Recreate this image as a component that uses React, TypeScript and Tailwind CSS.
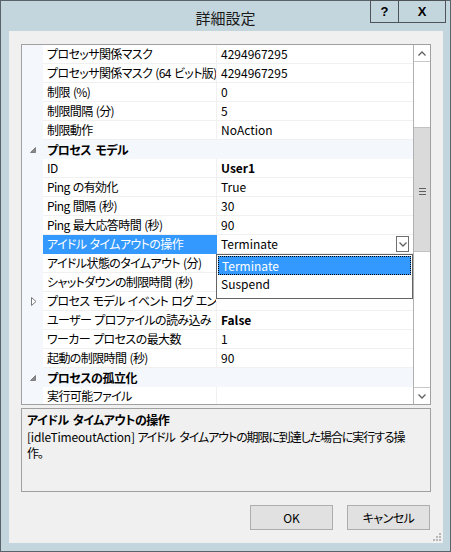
import React from "react";

type Row =
  | { kind: "prop"; label: string; value?: string; bold?: boolean; expandable?: boolean }
  | { kind: "cat"; label: string };

const rows: Row[] = [
  { kind: "prop", label: "プロセッサ関係マスク", value: "4294967295" },
  { kind: "prop", label: "プロセッサ関係マスク (64 ビット版)", value: "4294967295" },
  { kind: "prop", label: "制限 (%)", value: "0" },
  { kind: "prop", label: "制限間隔 (分)", value: "5" },
  { kind: "prop", label: "制限動作", value: "NoAction" },
  { kind: "cat", label: "プロセス モデル" },
  { kind: "prop", label: "ID", value: "User1", bold: true },
  { kind: "prop", label: "Ping の有効化", value: "True" },
  { kind: "prop", label: "Ping 間隔 (秒)", value: "30" },
  { kind: "prop", label: "Ping 最大応答時間 (秒)", value: "90" },
  { kind: "prop", label: "アイドル タイムアウトの操作", value: "Terminate" },
  // these two values sit under the open drop-down list
  { kind: "prop", label: "アイドル状態のタイムアウト (分)", value: "" },
  { kind: "prop", label: "シャットダウンの制限時間 (秒)", value: "" },
  { kind: "prop", label: "プロセス モデル イベント ログ エントリ", expandable: true },
  { kind: "prop", label: "ユーザー プロファイルの読み込み", value: "False", bold: true },
  { kind: "prop", label: "ワーカー プロセスの最大数", value: "1" },
  { kind: "prop", label: "起動の制限時間 (秒)", value: "90" },
  { kind: "cat", label: "プロセスの孤立化" },
  { kind: "prop", label: "実行可能ファイル", value: "" },
];

const SELECTED = 10;

function Chevron({ up }: { up?: boolean }) {
  return (
    <svg width="8" height="5" viewBox="0 0 8 5">
      <polyline
        points={up ? "0.5,4.5 4,1 7.5,4.5" : "0.5,0.5 4,4 7.5,0.5"}
        fill="none"
        stroke="#606060"
        strokeWidth="1.3"
      />
    </svg>
  );
}

function ExpandedGlyph() {
  return (
    <svg width="6" height="6" viewBox="0 0 6 6">
      <polygon points="5.5,0.5 5.5,5.5 0.5,5.5" fill="#8a8a8a" stroke="#6e6e6e" strokeWidth="0.8" />
    </svg>
  );
}

function CollapsedGlyph() {
  return (
    <svg width="6" height="9" viewBox="0 0 6 9">
      <polygon points="0.5,0.5 5,4.5 0.5,8.5" fill="#fff" stroke="#7a7a7a" strokeWidth="1" />
    </svg>
  );
}

function GridRow({ row, index }: { row: Row; index: number }) {
  if (row.kind === "cat") {
    return (
      <div className="flex h-[19px] shrink-0 bg-[#f4f7fc]">
        <div className="w-[21px] flex items-center justify-center pl-[1px] pt-[1px]">
          <ExpandedGlyph />
        </div>
        <div className="pl-[4px] flex items-center font-bold text-black whitespace-nowrap tracking-[-0.5px] [word-spacing:2px]">
          {row.label}
        </div>
      </div>
    );
  }
  const selected = index === SELECTED;
  return (
    <div className="flex h-[19px] shrink-0">
      <div className="w-[21px] bg-[#f4f7fc] flex items-center justify-center pl-[2px]">
        {row.expandable && <CollapsedGlyph />}
      </div>
      <div
        className={
          selected
            ? "w-[174px] bg-[#3399ff] text-white pl-[4px] flex items-center whitespace-nowrap overflow-hidden tracking-[-0.6px] [word-spacing:1px] border-b border-[#3399ff]"
            : "w-[174px] bg-white text-black pl-[4px] flex items-center whitespace-nowrap overflow-hidden tracking-[-0.6px] [word-spacing:1px] border-b border-r border-[#f0f0f0]"
        }
      >
        {row.label}
      </div>
      <div className="flex-1 bg-white pl-[4px] flex items-center border-b border-[#f0f0f0] text-black">
        <span className={row.bold ? "font-bold" : ""}>{row.value}</span>
        {selected && (
          <div className="ml-auto mr-[4px] w-[13px] h-[16px] border border-[#707070] bg-white flex items-center justify-center">
            <Chevron />
          </div>
        )}
      </div>
    </div>
  );
}

function Scrollbar() {
  return (
    <div className="w-[17px] shrink-0 bg-white border-l border-[#b0b0b0] flex flex-col">
      <div className="h-[17px] border-b border-[#c8c8c8] flex items-center justify-center">
        <Chevron up />
      </div>
      <div className="h-[65px]" />
      <div className="h-[125px] bg-[#dadada] border-y border-[#c2c2c2] flex flex-col items-center justify-center gap-[2px] pt-[4px]">
        <div className="w-[7px] h-[1px] bg-[#606060]" />
        <div className="w-[7px] h-[1px] bg-[#606060]" />
        <div className="w-[7px] h-[1px] bg-[#606060]" />
      </div>
      <div className="flex-1" />
      <div className="h-[17px] border-t border-[#c8c8c8] flex items-center justify-center">
        <Chevron />
      </div>
    </div>
  );
}

export default function App() {
  return (
    <div className="w-[451px] h-[552px] bg-[#c3d6de] border border-[#5a6369] flex flex-col text-[12px] font-['Noto_Sans_CJK_JP',sans-serif] [font-feature-settings:'palt'] leading-[16px] text-black">
      {/* title bar */}
      <div className="h-[30px] shrink-0 relative flex items-center justify-center">
        <span className="text-[15px] text-[#1a1a1a] pt-[4px]">詳細設定</span>
        <div className="absolute top-[-1px] right-[4px] flex h-[23px]">
          <div className="w-[29px] border border-[#4d5357] flex items-center justify-center font-bold text-[13px] font-['Liberation_Sans',sans-serif]">
            ?
          </div>
          <div className="w-[47px] border border-l-0 border-[#4d5357] flex items-center justify-center font-bold text-[13px] font-['Liberation_Sans',sans-serif]">
            X
          </div>
        </div>
      </div>

      {/* client area */}
      <div className="flex-1 ml-[8px] mr-[7px] mb-[8px] bg-[#f0f0f0] px-[12px] pt-[13px] flex flex-col">
        {/* property grid */}
        <div className="h-[361px] shrink-0 border border-[#a0a0a0] flex overflow-hidden">
          <div className="flex-1 relative flex flex-col overflow-hidden">
            {rows.map((r, i) => (
              <GridRow key={i} row={r} index={i} />
            ))}

            {/* open drop-down list for the selected value */}
            <div className="absolute left-[194px] top-[209px] w-[197px] h-[45px] bg-white border border-[#646464] p-[1px]">
              <div className="h-[19px] bg-[#3399ff] border border-dotted border-black text-white pl-[3px] flex items-center">
                Terminate
              </div>
              <div className="h-[18px] pl-[3px] flex items-center">Suspend</div>
            </div>
          </div>
          <Scrollbar />
        </div>

        {/* description */}
        <div className="mt-[3px] h-[84px] shrink-0 border border-[#a0a0a0] px-[5px] pt-[2px]">
          <div className="font-bold h-[18px] flex items-center tracking-[-0.5px] [word-spacing:2px]">
            アイドル タイムアウトの操作
          </div>
          <div className="leading-[16px] whitespace-nowrap">
            <span className="tracking-[-0.2px]">[idleTimeoutAction] </span>
            <span className="tracking-[-1.1px] [word-spacing:3px]">アイドル タイムアウトの期限に到達した場合に実行する操</span>
            <br />
            <span className="tracking-[-1.1px]">作。</span>
          </div>
        </div>

        {/* buttons */}
        <div className="mt-[13px] flex justify-end gap-[14px] pr-[1px]">
          <button className="w-[83px] h-[25px] bg-[#e1e1e1] border border-[#adadad] text-black">OK</button>
          <button className="w-[83px] h-[25px] bg-[#e1e1e1] border border-[#adadad] text-black tracking-[-0.5px]">
            キャンセル
          </button>
        </div>

        {/* size grip */}
        <div className="flex-1 flex items-end justify-end -mr-[10px] pb-[2px]">
          <svg width="8" height="8" viewBox="0 0 8 8">
            {[
              [6, 0],
              [6, 3],
              [3, 3],
              [6, 6],
              [3, 6],
              [0, 6],
            ].map(([x, y], i) => (
              <rect key={i} x={x} y={y} width="2" height="2" fill="#b8b8b8" />
            ))}
          </svg>
        </div>
      </div>
    </div>
  );
}
